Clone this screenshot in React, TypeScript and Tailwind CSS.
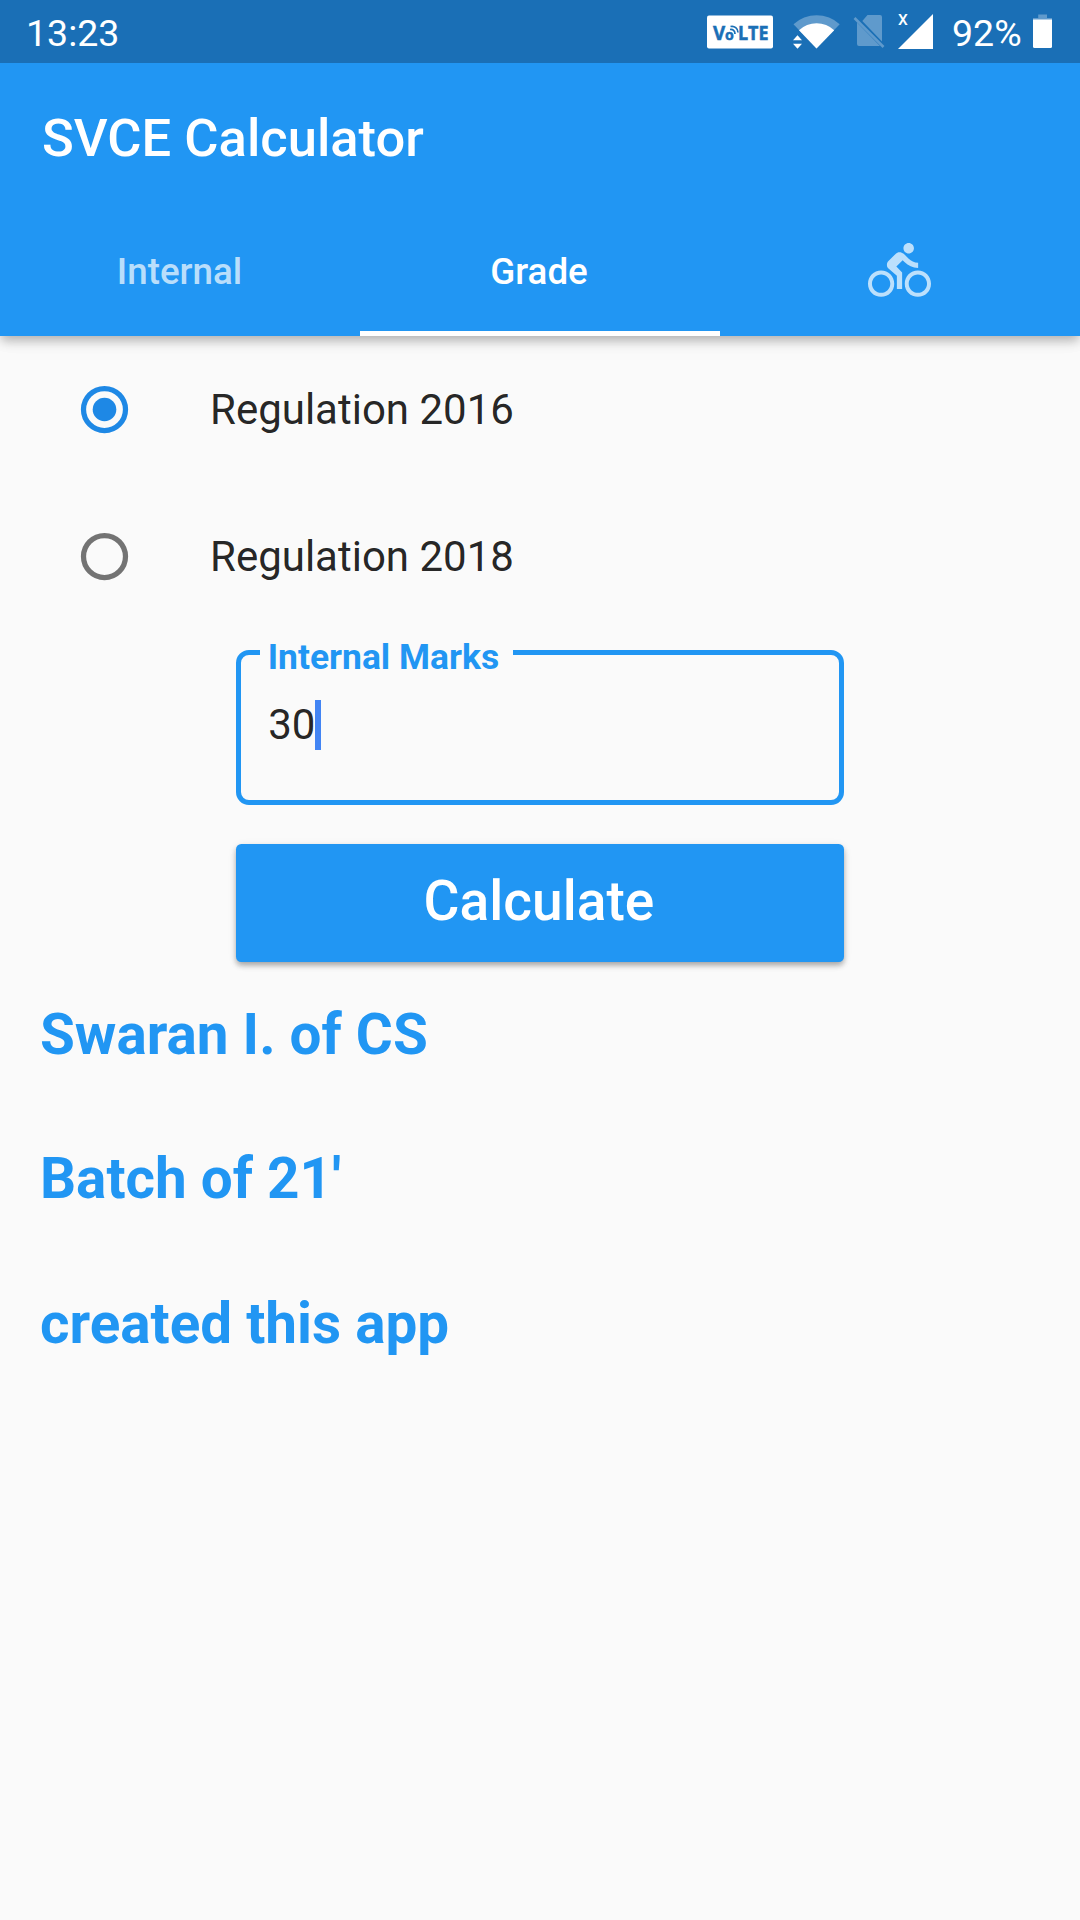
import React, { useState } from "react";

function VolteBadge() {
  return (
    <svg className="block h-[34px] w-[66px]" viewBox="0 0 66 34">
      <rect x="0" y="0.5" width="66" height="33" rx="2" fill="#fff" />
      <g fill="#1a6fb6" stroke="#1a6fb6" strokeWidth="0.5" fontFamily="'Open Sans', sans-serif" fontWeight="700">
        <text x="6" y="24.7" fontSize="18.7" textLength="12.2" lengthAdjust="spacingAndGlyphs">V</text>
        <text x="18" y="24.7" fontSize="14.5" textLength="8.8" lengthAdjust="spacingAndGlyphs">o</text>
        <text x="31" y="24.7" fontSize="18.7" textLength="30.5" lengthAdjust="spacingAndGlyphs">LTE</text>
      </g>
      <g fill="none" stroke="#1a6fb6" strokeWidth="1.7">
        <path d="M23.5 11.5C27.5 10.5 31 13.5 31 17.5" />
        <path d="M23 14.5C26 14 28 16 28 19" />
      </g>
    </svg>
  );
}

function WifiIcon() {
  return (
    <svg className="block h-[36px] w-[48px]" viewBox="793 13 48 36">
      <path d="M816.5 48.5L793.5 24.2A34 34 0 0 1 839.7 24.2Z" fill="#fff" fillOpacity="0.3" />
      <path d="M816.5 48.5L799 30.2A25.5 25.5 0 0 1 834.2 30.2Z" fill="#fff" />
      <path d="M793 40.3L797.5 35.3L802 40.3ZM793 43.7L797.5 48.7L802 43.7Z" fill="#fff" />
    </svg>
  );
}

function NoSimIcon() {
  return (
    <svg className="block h-[34px] w-[32px]" viewBox="853 14 32 34">
      <path d="M867.5 15H880Q882 15 882 17V41.5L862.3 21ZM857 22.5L880 46H859Q857 46 857 44Z" fill="#5f9acc" />
      <path d="M854.5 18L883.5 47" stroke="#5f9acc" strokeWidth="2.6" />
    </svg>
  );
}

function SignalIcon() {
  return (
    <svg className="block h-[36px] w-[36px] overflow-visible" viewBox="897 13 36 36">
      <path d="M898 49L933 14V49Z" fill="#fff" />
      <text x="898" y="25" fill="#fff" fontFamily="Roboto, sans-serif" fontWeight="500" fontSize="15.5">X</text>
    </svg>
  );
}

function BatteryIcon() {
  return (
    <svg className="block h-[35px] w-[19px]" viewBox="0 0 19 35">
      <path d="M5.2 0.5H14V4H19V6H0V4H5.2Z" fill="#fff" fillOpacity="0.3" />
      <path d="M0 5.5H19V32.5Q19 34 17.5 34H1.5Q0 34 0 32.5Z" fill="#fff" />
    </svg>
  );
}

function BikeIcon() {
  return (
    <svg className="block size-[63px]" viewBox="0 0 24 24" fill="#fff" fillOpacity="0.7">
      <path d="M15.5 5.5c1.1 0 2-.9 2-2s-.9-2-2-2-2 .9-2 2 .9 2 2 2zM5 12c-2.8 0-5 2.2-5 5s2.2 5 5 5 5-2.2 5-5-2.2-5-5-5zm0 8.5c-1.9 0-3.5-1.6-3.5-3.5s1.6-3.5 3.5-3.5 3.5 1.6 3.5 3.5-1.6 3.5-3.5 3.5zm5.8-10l2.4-2.4.8.8c1.3 1.3 3 2.1 5.1 2.1V9c-1.5 0-2.7-.6-3.6-1.5l-1.9-1.9c-.5-.4-1-.6-1.6-.6s-1.1.2-1.4.6L7.8 8.4c-.4.4-.6.9-.6 1.4 0 .6.2 1.1.6 1.4L11 14v5h2v-6.2l-2.2-2.3zM19 12c-2.8 0-5 2.2-5 5s2.2 5 5 5 5-2.2 5-5-2.2-5-5-5zm0 8.5c-1.9 0-3.5-1.6-3.5-3.5s1.6-3.5 3.5-3.5 3.5 1.6 3.5 3.5-1.6 3.5-3.5 3.5z" />
    </svg>
  );
}

function StatusBar() {
  return (
    <div className="flex h-[63px] items-start bg-[#1a6fb6] pl-[26px] text-[37.5px] leading-[66px] text-white">
      <span>13:23</span>
      <div className="ml-auto flex items-start">
        <div className="mt-[15px] mr-[20px]"><VolteBadge /></div>
        <div className="mt-[13px] mr-[12px]"><WifiIcon /></div>
        <div className="mt-[14px] mr-[12px]"><NoSimIcon /></div>
        <div className="mt-[13px]"><SignalIcon /></div>
        <span className="w-[100px] pl-[19px]">92%</span>
        <div className="mt-[14px] mr-[28px]"><BatteryIcon /></div>
      </div>
    </div>
  );
}

function RadioRow({ label, checked, onSelect }: { label: string; checked: boolean; onSelect: () => void }) {
  return (
    <button
      type="button"
      role="radio"
      aria-checked={checked}
      onClick={onSelect}
      className="flex h-[147px] w-full items-center pl-[73px] text-left text-[42px] leading-[49px] text-black/87"
    >
      <svg className="mr-[74px] block size-[63px]" viewBox="0 0 24 24">
        <circle cx="12" cy="12" r="8" fill="none" strokeWidth="2" stroke={checked ? "#1e88e5" : "#737373"} />
        {checked && <circle cx="12" cy="12" r="4.5" fill="#1e88e5" />}
      </svg>
      <span>{label}</span>
    </button>
  );
}

export default function App() {
  const [regulation, setRegulation] = useState("2016");
  return (
    <div className="flex h-[1920px] w-[1080px] flex-col bg-[#fafafa] font-[Roboto,sans-serif]">
      <header className="shadow-[0_5px_9px_-3px_rgba(0,0,0,0.16),0_7px_10px_0_rgba(0,0,0,0.12),0_2px_18px_0_rgba(0,0,0,0.08)]">
        <StatusBar />
        <div className="bg-[#2196f3]">
          <h1 className="h-[147px] pl-[42px] text-[52.5px] leading-[150px] font-medium text-white">SVCE Calculator</h1>
          <nav className="grid h-[126px] grid-cols-3 text-[36.75px] font-medium text-white">
            <div className="pr-px text-center leading-[123px] text-white/70">Internal</div>
            <div className="flex flex-col">
              <span className="h-[120.75px] pr-[2px] text-center leading-[123px]">Grade</span>
              <span className="h-[5.25px] bg-white" />
            </div>
            <div className="flex h-[121px] items-center justify-center pr-px"><BikeIcon /></div>
          </nav>
        </div>
      </header>

      <main className="flex flex-col">
        <div role="radiogroup">
          <RadioRow label="Regulation 2016" checked={regulation === "2016"} onSelect={() => setRegulation("2016")} />
          <RadioRow label="Regulation 2018" checked={regulation === "2018"} onSelect={() => setRegulation("2018")} />
        </div>

        <fieldset className="mx-[236.25px] mt-[8px] h-[166.5px] rounded-[13px] border-[5.25px] border-[#2196f3] pl-[26px]">
          <legend className="-ml-[7.5px] h-[28px] w-[253px] pl-[8px] text-[35.44px] leading-[38px] font-bold text-[#2196f3]">
            Internal Marks
          </legend>
          <div className="flex items-center pt-[34px] pl-px text-[42px] leading-[49px] text-black/87">
            <span>30</span>
            <span className="h-[49.5px] w-[5.5px] bg-[#4285f4]" />
          </div>
        </fieldset>

        <button
          type="button"
          className="mx-[236.25px] mt-[39.5px] h-[118px] rounded-[5.25px] bg-[#2196f3] pr-[2px] pb-[4px] text-[55.125px] leading-[114px] font-medium text-white shadow-[0_4px_6px_-1px_rgba(0,0,0,0.22),0_3px_5px_0_rgba(0,0,0,0.12),0_2px_10px_0_rgba(0,0,0,0.08)]"
        >
          Calculate
        </button>

        <div className="mt-[40px] pl-[40px] text-[56.6px] leading-[66px] font-bold text-[#2196f3]">
          <p className="h-[144px]">Swaran I. of CS</p>
          <p className="h-[145px]">Batch of 21'</p>
          <p>created this app</p>
        </div>
      </main>
    </div>
  );
}
